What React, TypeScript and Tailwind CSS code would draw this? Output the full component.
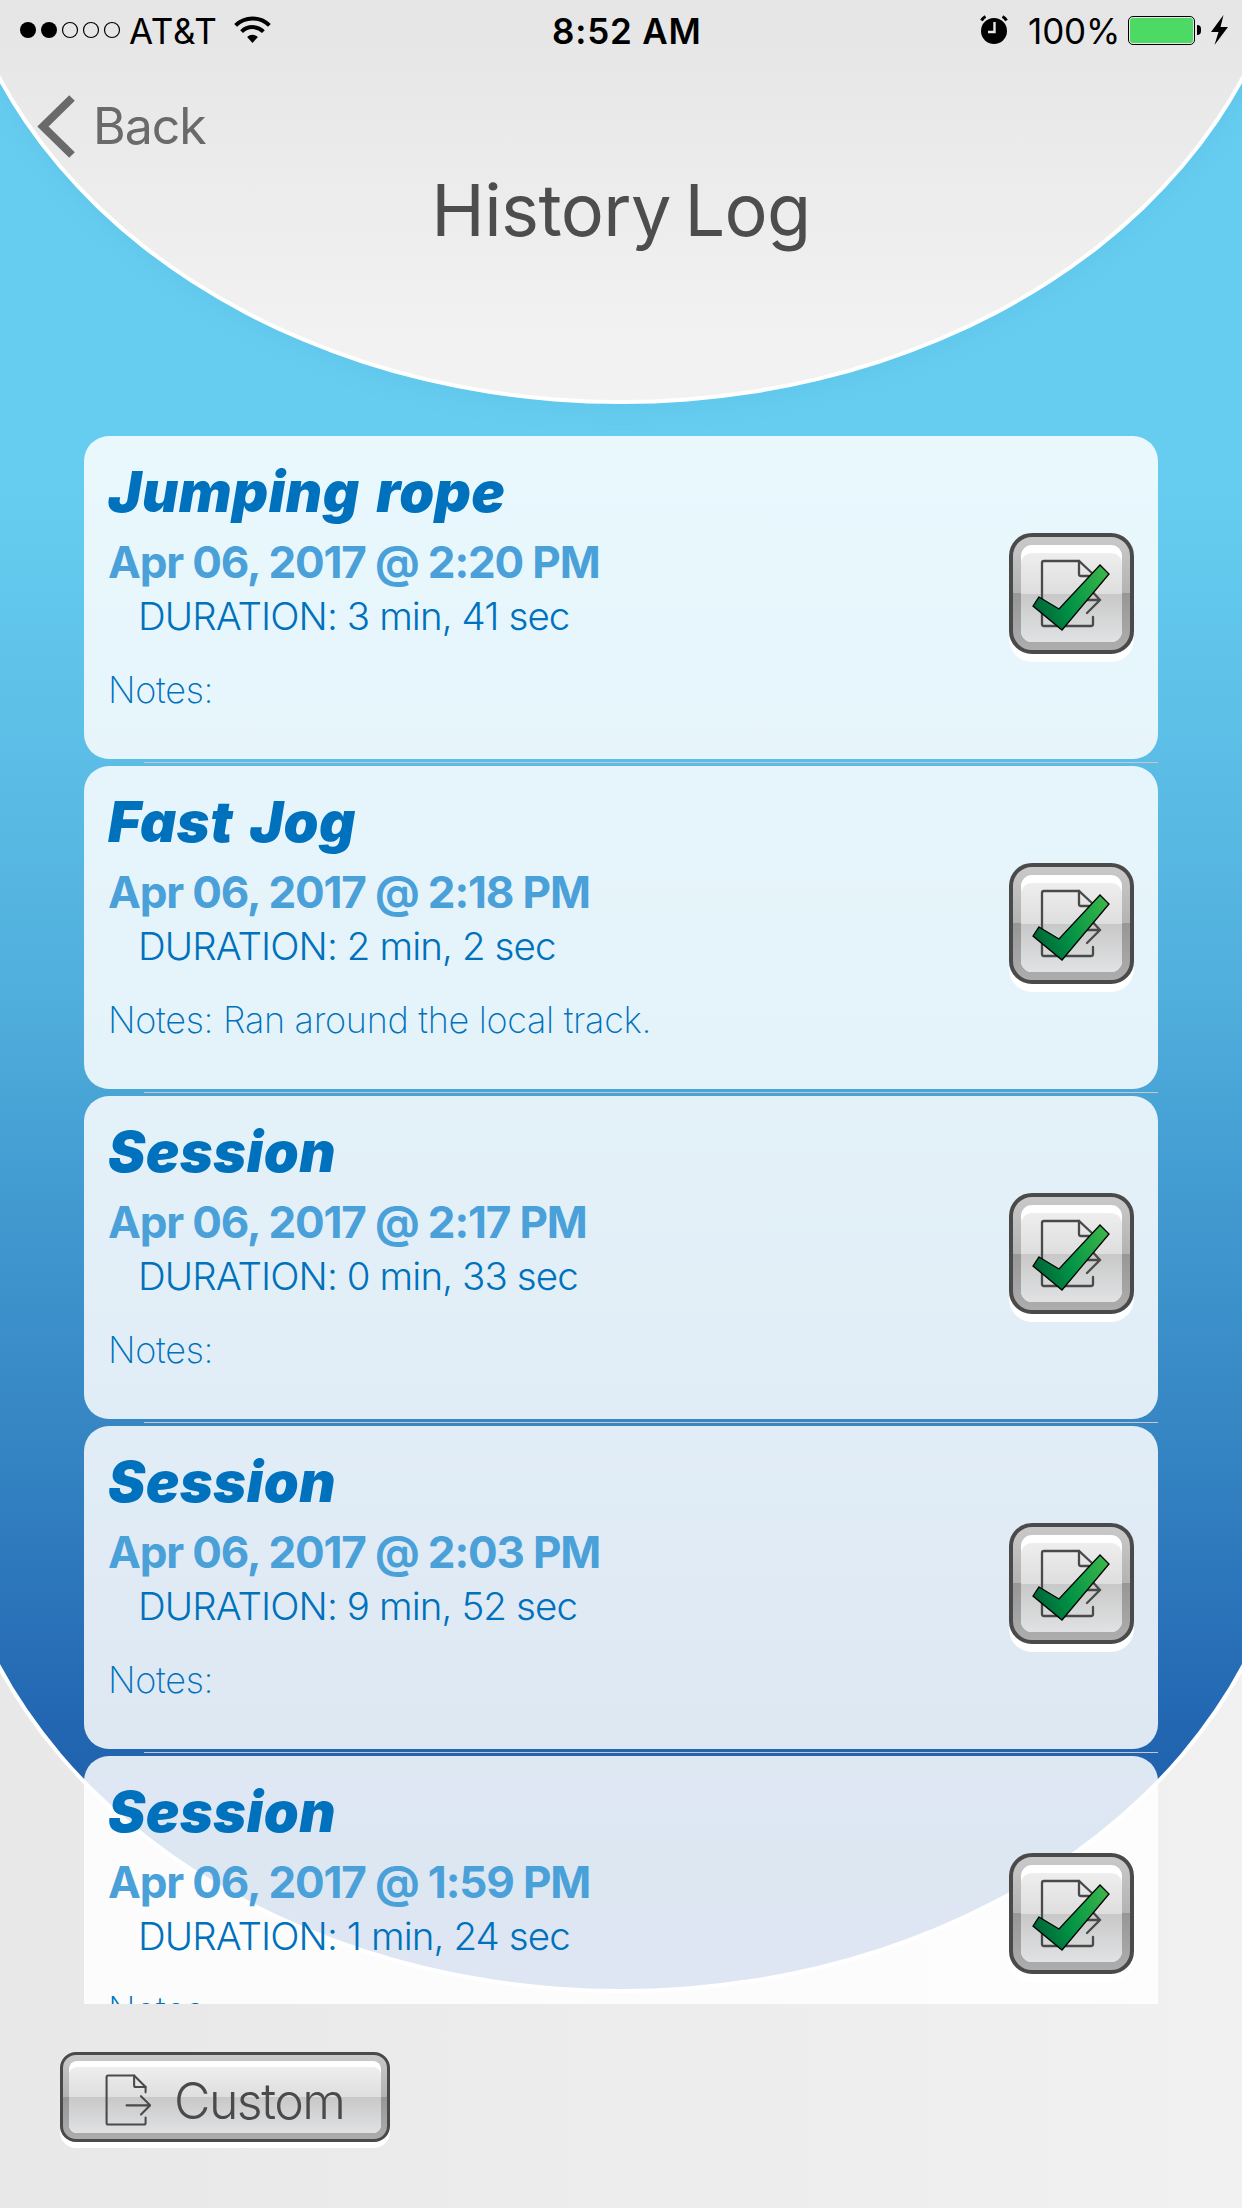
// src/App.tsx
// History log screen: status bar, header, list of sessions, export button.

interface Entry {
  title: string
  date: string
  duration: string
  notes: string
}

const ENTRIES: Entry[] = [
  { title: 'Jumping rope', date: 'Apr 06, 2017 @ 2:20 PM', duration: '3 min, 41 sec', notes: '' },
  { title: 'Fast Jog', date: 'Apr 06, 2017 @ 2:18 PM', duration: '2 min, 2 sec', notes: 'Ran around the local track.' },
  { title: 'Session', date: 'Apr 06, 2017 @ 2:17 PM', duration: '0 min, 33 sec', notes: '' },
  { title: 'Session', date: 'Apr 06, 2017 @ 2:03 PM', duration: '9 min, 52 sec', notes: '' },
  { title: 'Session', date: 'Apr 06, 2017 @ 1:59 PM', duration: '1 min, 24 sec', notes: '' },
]

function Backdrop() {
  return (
    <div className="absolute inset-0 -z-10 overflow-hidden bg-linear-to-r from-[#e8e8e8] to-[#f1f1f1]">
      <div className="absolute -left-[56px] -top-[20px] h-[2013px] w-[1354px] rounded-b-[50%_533px] border-4 border-white bg-[linear-gradient(180deg,#66cdf0_500px,#5dc0e7_736px,#50aedc_1016px,#4199d0_1226px,#3585c3_1456px,#2b74ba_1616px,#2164b0_1766px,#1b57a5_2000px)]" />
      <div className="absolute -left-[56px] -top-[662px] h-[1066px] w-[1354px] rounded-[50%] border-4 border-white bg-[linear-gradient(180deg,#e5e5e5_62%,#f2f2f2_95%)] shadow-[0_4px_24px_rgba(60,160,210,0.15)]" />
    </div>
  )
}

function StatusBar() {
  return (
    <div className="flex h-[60px] items-center leading-none text-black">
      <svg className="ml-5" width="101" height="18" viewBox="0 0 101 18">
        <circle cx="8" cy="9" r="8" />
        <circle cx="29" cy="9" r="8" />
        <g fill="none" stroke="#000" strokeWidth="1.2">
          <circle cx="50" cy="9" r="7.5" />
          <circle cx="71" cy="9" r="7.5" />
          <circle cx="92" cy="9" r="7.5" />
        </g>
      </svg>
      <span className="ml-[8px] mt-[3px] w-[105px] whitespace-nowrap text-[35px] tracking-[0.7px]">AT&amp;T</span>
      <svg width="37" height="28" viewBox="0 0 37 28" fill="none" stroke="#000" strokeWidth="4">
        <path d="M1.6 9.4a24 24 0 0 1 33.8 0" />
        <path d="M7.6 15.6a15.5 15.5 0 0 1 21.8 0" />
        <path d="M18.5 27l-5.4-6a7.8 7.8 0 0 1 10.8 0z" fill="#000" stroke="none" />
      </svg>
      <span className="ml-[281px] mt-[3px] w-[150px] whitespace-nowrap text-[35px] font-semibold tracking-[0.8px]">8:52 AM</span>
      <svg className="ml-auto" width="28" height="32" viewBox="0 0 28 32">
        <circle cx="14" cy="17" r="13" />
        <path d="M1.5 6.5a9 9 0 0 1 4-4M26.5 6.5a9 9 0 0 0-4-4" fill="none" stroke="#000" strokeWidth="3" />
        <path d="M14.5 8v10H8" fill="none" stroke="#e6e6e6" strokeWidth="2.4" />
      </svg>
      <span className="ml-5 mt-[3px] w-[91px] whitespace-nowrap text-[35px] tracking-[-0.1px]">100%</span>
      <div className="ml-[9px] h-[29px] w-[67px] rounded-[5px] border border-black p-px">
        <div className="h-full w-full rounded-[3px] bg-[#4cd964]" />
      </div>
      <div className="ml-[2px] h-[10px] w-1 rounded-r-full bg-black" />
      <svg className="ml-[10px] mr-[14px]" width="17" height="30" viewBox="0 0 17 30">
        <path d="M12.5 0L0 17h7.5L3.5 30L17 12H9.5z" />
      </svg>
    </div>
  )
}

function ExportIcon({ width, height, stroke }: { width: number; height: number; stroke: number }) {
  return (
    <svg width={width} height={height} viewBox="0 0 60 68" fill="none" stroke="#4a4a4a" strokeWidth={stroke} strokeLinecap="round">
      <path d="M53 24v-7L38 2H4a2 2 0 0 0-2 2v60a2 2 0 0 0 2 2h47a2 2 0 0 0 2-2v-7" />
      <path d="M38 2v13a2 2 0 0 0 2 2h13" />
      <path d="M28 41h30M47 29l12 12-12 12" />
    </svg>
  )
}

function EntryButton() {
  return (
    <button className="relative h-[121px] w-[125px] rounded-[23px] border-4 border-[#4a4a4a] bg-[linear-gradient(180deg,#c9c9c9_0%,#b3b3b3_50%,#979797_50%,#adadad_100%)] p-2 shadow-[0_8px_0_#fff]">
      <div className="h-full overflow-hidden rounded-[11px] bg-white pt-2">
        <div className="h-full rounded-t-[11px] bg-[linear-gradient(180deg,#eee_0%,#dedede_46%,#c8c8c8_46%,#e0e2e3_100%)]" />
      </div>
      <svg className="absolute left-0 top-0" width="117" height="113" viewBox="0 0 117 113" fill="none">
        <defs>
          <linearGradient id="check" x1="20" y1="62" x2="92" y2="34" gradientUnits="userSpaceOnUse">
            <stop offset="0" stopColor="#006837" />
            <stop offset="0.4" stopColor="#009245" />
            <stop offset="1" stopColor="#39b54a" />
          </linearGradient>
        </defs>
        <g stroke="#4a4a4a" strokeWidth="2.3" strokeLinecap="round">
          <path d="M80 37L66 24H31a2 2 0 0 0-2 2v61a2 2 0 0 0 2 2h47a2 2 0 0 0 2-2v-7" />
          <path d="M66 24v13a2 2 0 0 0 2 2h12V37M56 63h31M75 50l12 13-13 13" />
        </g>
        <path d="M26 60l20 12L87 28l9 9L49 93L20 69z" fill="url(#check)" stroke="#000" strokeWidth="1.3" />
      </svg>
    </button>
  )
}

function EntryCard({ entry }: { entry: Entry }) {
  return (
    <div className="h-[330px] shrink-0">
      <div className="flex h-[323px] items-start justify-between rounded-[25px] bg-white/85 pl-6 pr-6 text-[#0071bc]">
        <div className="whitespace-nowrap">
          <h2 className="mt-[21px] h-[70px] text-[56px] font-black italic leading-[70px] tracking-[0.5px] [word-spacing:5px]">{entry.title}</h2>
          <p className="mt-2 h-[54px] text-[44px] font-bold leading-[54px] tracking-[-1.15px] text-[#4aa0d8]">{entry.date}</p>
          <p className="ml-[30px] h-[54px] text-[38.5px] font-light leading-[54px] tracking-[-0.9px]">DURATION: {entry.duration}</p>
          <p className="mt-5 h-[54px] text-[36px] font-extralight leading-[54px] tracking-[-0.3px]">Notes: {entry.notes}</p>
        </div>
        <div className="pt-[97px]">
          <EntryButton />
        </div>
      </div>
      <div className="ml-[60px] mt-[3px] h-px bg-[#c8c7cc]" />
    </div>
  )
}

export default function App() {
  return (
    <div className="relative isolate flex h-[2208px] w-[1242px] flex-col overflow-hidden font-['Inter',sans-serif]">
      <Backdrop />
      <StatusBar />
      <header className="h-[376px]">
        <button className="mt-[34px] flex h-16 items-center pl-[37px] text-[#6a6a6a]">
          <svg width="38" height="63" viewBox="0 0 38 63" fill="none" stroke="#6a6a6a" strokeWidth="8">
            <path d="M35 3L6 31.5L35 60" />
          </svg>
          <span className="ml-[18px] text-[50px] leading-none tracking-[-1px]">Back</span>
        </button>
        <h1 className="mt-[7px] text-center text-[72px] font-normal leading-[90px] tracking-[-0.6px] text-[#4d4d4d] [word-spacing:-6px]">History Log</h1>
      </header>
      <main className="ml-[84px] flex h-[1568px] w-[1074px] flex-col overflow-hidden">
        {ENTRIES.map((entry) => (
          <EntryCard key={entry.date} entry={entry} />
        ))}
      </main>
      <footer className="pl-[60px] pt-12">
        <button className="h-[90px] w-[330px] rounded-[16px] border-[3px] border-[#4a4a4a] bg-[linear-gradient(180deg,#c9c9c9_0%,#b3b3b3_50%,#979797_50%,#adadad_100%)] p-[6px] shadow-[0_6px_0_#fff]">
          <div className="h-full overflow-hidden rounded-[8px] bg-white pt-[6px]">
            <div className="flex h-full items-center rounded-t-[8px] bg-[linear-gradient(180deg,#eee_0%,#dedede_46%,#c8c8c8_46%,#e0e2e3_100%)] pl-[36px]">
              <ExportIcon width={46} height={52} stroke={2.7} />
              <span className="ml-[23px] mt-[2px] text-[50px] font-light leading-none tracking-[-1.5px] text-[#4a4a4a]">Custom</span>
            </div>
          </div>
        </button>
      </footer>
    </div>
  )
}
